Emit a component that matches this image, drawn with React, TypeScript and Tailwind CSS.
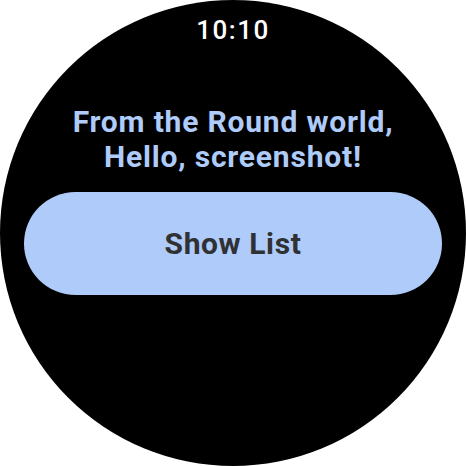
export default function App() {
  return (
    <div className="w-[466px] h-[466px] bg-white">
      <div className="w-[466px] h-[466px] rounded-full bg-black overflow-hidden flex flex-col items-center font-['Roboto',sans-serif]">
        <div className="mt-[15px] text-[26px] leading-[30px] font-medium text-white tracking-[1.5px]">10:10</div>
        <div className="mt-[59px] text-center text-[#aecbfa] font-bold text-[30px] leading-[35px] tracking-[0.8px]">
          From the Round world,
          <br />
          Hello, screenshot!
        </div>
        <button className="mt-[18px] w-[418px] h-[103px] rounded-full bg-[#aecbfa] text-[#303133] font-bold text-[30px] tracking-[0.6px]">
          Show List
        </button>
      </div>
    </div>
  );
}
